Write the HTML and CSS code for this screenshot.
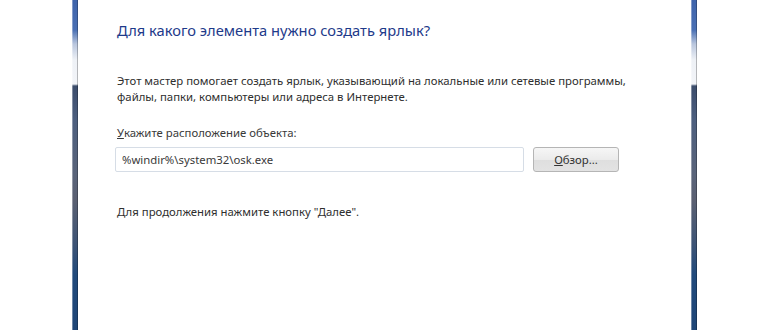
FILE: index.html
```html
<!DOCTYPE html>
<html>
<head>
  <link rel="stylesheet" href="styles.css">
</head>
<body>
  <div class="desk">
    <div class="frame"></div>
    <div class="wizard">
      <h1 class="title">Для какого элемента нужно создать ярлык?</h1>
      <p class="intro">Этот мастер помогает создать ярлык, указывающий на локальные или сетевые программы,<br>файлы, папки, компьютеры или адреса в Интернете.</p>
      <label class="label" for="target"><u>У</u>кажите расположение объекта:</label>
      <div class="row">
        <input class="path" type="text" id="target" value="%windir%\system32\osk.exe">
        <button class="browse"><u>О</u>бзор...</button>
      </div>
      <p class="hint">Для продолжения нажмите кнопку "Далее".</p>
    </div>
    <div class="frame"></div>
  </div>
</body>
</html>
```

FILE: styles.css
```css
body {
  margin: 0;
  background: #fff;
  font-family: "Noto Sans", "Open Sans", sans-serif;
  color: #2f2f2f;
}
.desk {
  display: flex;
  height: 330px;
  padding: 0 73px 0 72px;
}
.frame {
  width: 6px;
  flex: none;
  background: linear-gradient(to bottom,
    #3f64ab 0px, #4a70b4 30px, #b9c6de 44px, #eef1f6 60px, #f2f4f8 84px,
    #3c4d6c 86px, #4d5f7f 120px, #5a647a 175px, #5b6072 200px,
    #3d5476 245px, #214a7c 275px, #1f4677 330px);
  box-shadow: inset 1px 0 0 rgba(255,255,255,0.35), inset -1px 0 0 rgba(0,0,0,0.25);
}
.wizard {
  flex: 1;
  padding: 0 0 0 39px;
}
.title {
  margin: 20px 0 0;
  font-size: 14.7px;
  font-weight: normal;
  color: #1e3a8a;
  line-height: 20px;
}
.intro {
  margin: 33px 0 0;
  font-size: 11.35px;
  line-height: 16px;
}
.label {
  display: block;
  margin-top: 20px;
  font-size: 11.35px;
  line-height: 15px;
  color: #3a3a3a;
}
.row {
  display: flex;
  gap: 9px;
  margin-top: 7px;
}
.path {
  width: 409px;
  height: 25px;
  box-sizing: border-box;
  border: 1px solid #d6dde6;
  border-radius: 2px;
  padding: 0 6px;
  font-family: inherit;
  font-size: 11.35px;
  color: #3a3a3a;
  background: #fff;
  margin-left: -2px;
}
.browse {
  width: 86px;
  height: 25px;
  border: 1px solid #b5b5b5;
  border-radius: 3px;
  background: linear-gradient(#f6f6f6, #ebebeb 50%, #dedede 51%, #e3e3e3);
  font-family: inherit;
  font-size: 11.35px;
  color: #333;
  padding: 0;
}
.hint {
  margin: 32px 0 0;
  font-size: 11.35px;
  line-height: 15px;
}
```
